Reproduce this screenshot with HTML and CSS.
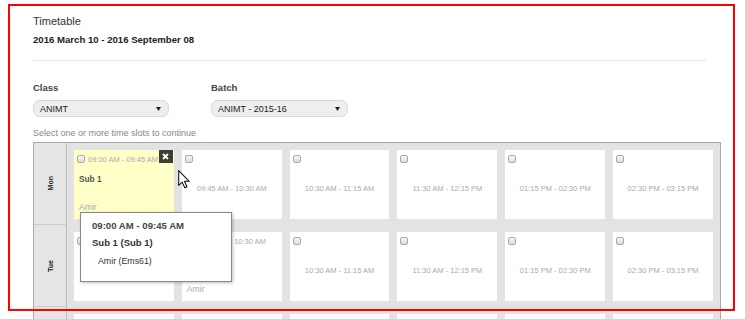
FILE: index.html
```html
<!DOCTYPE html>
<html lang="en">
<head>
    <meta charset="UTF-8">
    <meta name="viewport" content="width=device-width, initial-scale=1.0">
    <title>Timetable</title>
    <link rel="stylesheet" href="styles.css">
</head>
<body>
    <div class="page">
        <!-- Header -->
        <h1 class="title">Timetable</h1>
        <div class="range">2016 March 10 - 2016 September 08</div>
        <div class="divider"></div>

        <!-- Filters -->
        <div class="filters">
            <div class="filter">
                <label class="filter-label">Class</label>
                <div class="select-box">
                    <span>ANIMT</span>
                    <svg class="caret" width="5" height="4" viewBox="0 0 5 4"><path d="M0 0 L5 0 L2.5 4 Z" fill="#222"/></svg>
                </div>
            </div>
            <div class="filter">
                <label class="filter-label">Batch</label>
                <div class="select-box select-wide">
                    <span>ANIMT - 2015-16</span>
                    <svg class="caret" width="5" height="4" viewBox="0 0 5 4"><path d="M0 0 L5 0 L2.5 4 Z" fill="#222"/></svg>
                </div>
            </div>
        </div>

        <p class="hint">Select one or more time slots to continue</p>

        <!-- Timetable grid -->
        <div class="grid">
            <div class="grid-row">
                <div class="day"><span>Mon</span></div>
                <div class="slots">
                    <div class="slot slot-assigned slot-active">
                        <div class="slot-head"><span class="check"></span><span class="slot-time">09:00 AM - 09:45 AM</span></div>
                        <div class="slot-subject">Sub 1</div>
                        <div class="slot-teacher">Amir</div>
                        <div class="slot-close">
                            <svg width="7" height="7" viewBox="0 0 7 7"><path d="M1 1 L6 6 M6 1 L1 6" stroke="#fff" stroke-width="1.8"/></svg>
                        </div>
                        <!-- Hover tooltip -->
                        <div class="tooltip">
                            <div class="tooltip-time">09:00 AM - 09:45 AM</div>
                            <div class="tooltip-subject">Sub 1 (Sub 1)</div>
                            <div class="tooltip-teacher">Amir (Ems61)</div>
                        </div>
                    </div>
                    <div class="slot"><span class="check"></span><div class="slot-body">09:45 AM - 10:30 AM</div></div>
                    <div class="slot"><span class="check"></span><div class="slot-body">10:30 AM - 11:15 AM</div></div>
                    <div class="slot"><span class="check"></span><div class="slot-body">11:30 AM - 12:15 PM</div></div>
                    <div class="slot"><span class="check"></span><div class="slot-body">01:15 PM - 02:30 PM</div></div>
                    <div class="slot"><span class="check"></span><div class="slot-body">02:30 PM - 03:15 PM</div></div>
                </div>
            </div>

            <div class="grid-row">
                <div class="day"><span>Tue</span></div>
                <div class="slots">
                    <div class="slot"><span class="check"></span><div class="slot-body">09:00 AM - 09:45 AM</div></div>
                    <div class="slot slot-assigned">
                        <div class="slot-head"><span class="check"></span><span class="slot-time">09:45 AM - 10:30 AM</span></div>
                        <div class="slot-subject">Sub 1</div>
                        <div class="slot-teacher">Amir</div>
                    </div>
                    <div class="slot"><span class="check"></span><div class="slot-body">10:30 AM - 11:15 AM</div></div>
                    <div class="slot"><span class="check"></span><div class="slot-body">11:30 AM - 12:15 PM</div></div>
                    <div class="slot"><span class="check"></span><div class="slot-body">01:15 PM - 02:30 PM</div></div>
                    <div class="slot"><span class="check"></span><div class="slot-body">02:30 PM - 03:15 PM</div></div>
                </div>
            </div>

            <!-- Next day, only its top edge shows -->
            <div class="grid-row">
                <div class="day"></div>
                <div class="slots">
                    <div class="slot"></div>
                    <div class="slot"></div>
                    <div class="slot"></div>
                    <div class="slot"></div>
                    <div class="slot"></div>
                    <div class="slot"></div>
                </div>
            </div>
        </div>
    </div>

    <!-- Mouse pointer -->
    <svg class="cursor" width="13" height="19" viewBox="0 0 12 18">
        <path d="M0.5 0.5 L0.5 14.5 L3.8 11.5 L6.2 16.8 L8.3 15.9 L6 10.7 L10.5 10.7 Z" fill="#fff" stroke="#111" stroke-width="1" stroke-linejoin="round"/>
    </svg>

    <!-- Highlight frame -->
    <div class="frame"></div>
</body>
</html>
```

FILE: styles.css
```css
/* General Reset and Basic Styles */
* {
    margin: 0;
    padding: 0;
    box-sizing: border-box;
}

html,
body {
    overflow: hidden;
}

body {
    font-family: "Liberation Sans", Arial, sans-serif;
    background-color: #fff;
    color: #333;
}

.page {
    padding: 14px 24px 0 33px;
}

/* Header */
.title {
    font-size: 11px;
    font-weight: normal;
    line-height: 14px;
    color: #333;
}

.range {
    margin-top: 5px;
    font-size: 9.6px;
    font-weight: bold;
    line-height: 14px;
    color: #222;
}

.divider {
    height: 1px;
    background-color: #e6e6e6;
    margin: 13px 15px 0 0;
}

/* Filters */
.filters {
    display: flex;
    gap: 42px;
    margin-top: 21px;
}

.filter-label {
    display: block;
    font-size: 9.5px;
    font-weight: bold;
    line-height: 12px;
    color: #444;
    margin-bottom: 6px;
}

.select-box {
    display: flex;
    align-items: center;
    justify-content: space-between;
    width: 136px;
    height: 17px;
    padding: 0 7px 0 6px;
    background-color: #eee;
    border: 1px solid #d8d8d8;
    border-radius: 7px;
    font-size: 9px;
    color: #222;
}

.select-wide {
    width: 137px;
}

.hint {
    margin-top: 10px;
    font-size: 9px;
    line-height: 12px;
    color: #888;
}

/* Grid */
.grid {
    margin-top: 3px;
    border: 1px solid #aaa;
    background-color: #e3e3e3;
}

.grid-row {
    display: flex;
}

.day {
    width: 33px;
    display: flex;
    align-items: center;
    justify-content: center;
    border-right: 1px solid #bbb;
    border-bottom: 1px solid #ccc;
    background-color: #e5e5e5;
}

.day span {
    writing-mode: vertical-rl;
    transform: rotate(180deg);
    font-size: 7px;
    font-weight: bold;
    color: #222;
}

.slots {
    flex: 1;
    display: flex;
    gap: 8px;
    padding: 7px 7px 6px;
}

.slot {
    flex: 1;
    height: 69px;
    background-color: #fff;
    padding: 5px 3px;
    position: relative;
    display: flex;
    flex-direction: column;
}

.check {
    display: block;
    flex-shrink: 0;
    width: 8px;
    height: 8px;
    border: 1px solid #aaa;
    border-radius: 2px;
    background: linear-gradient(#f6f6f6, #dcdcdc);
}

.slot-body {
    flex: 1;
    display: flex;
    align-items: center;
    justify-content: center;
    font-size: 7.5px;
    color: #aaa;
}

/* Assigned slot */
.slot-head {
    display: flex;
    align-items: center;
    gap: 3px;
    height: 8px;
}

.slot-time {
    font-size: 7.5px;
    color: #aaa;
    white-space: nowrap;
}

.slot-subject {
    margin-top: 11px;
    padding-left: 2px;
    font-size: 8.3px;
    font-weight: bold;
    line-height: 10px;
    color: #555;
}

.slot-teacher {
    margin-top: 18px;
    padding-left: 2px;
    font-size: 8.6px;
    line-height: 10px;
    color: #aaa;
}

.slot-active {
    background-color: #ffffc8;
}

.slot-close {
    position: absolute;
    top: 0;
    right: 1px;
    width: 14px;
    height: 13px;
    background-color: #3d3d35;
    display: flex;
    align-items: center;
    justify-content: center;
}

/* Tooltip */
.tooltip {
    position: absolute;
    left: 6px;
    top: 62px;
    width: 152px;
    height: 70px;
    padding: 6px 11px;
    background-color: #fff;
    border: 1px solid #888;
    box-shadow: 1px 1px 3px rgba(0, 0, 0, 0.25);
    z-index: 5;
}

.tooltip-time {
    font-size: 9.6px;
    font-weight: bold;
    line-height: 14px;
    color: #444;
}

.tooltip-subject {
    margin-top: 3px;
    font-size: 9.5px;
    font-weight: bold;
    line-height: 14px;
    color: #333;
}

.tooltip-teacher {
    margin-top: 5px;
    padding-left: 6px;
    font-size: 8.8px;
    line-height: 12px;
    color: #333;
}

/* Overlays */
.cursor {
    position: absolute;
    left: 178px;
    top: 170px;
    z-index: 10;
}

.frame {
    position: absolute;
    left: 8px;
    top: 4px;
    width: 727px;
    height: 307px;
    border: 2px solid #f00;
    pointer-events: none;
    z-index: 20;
}
```
